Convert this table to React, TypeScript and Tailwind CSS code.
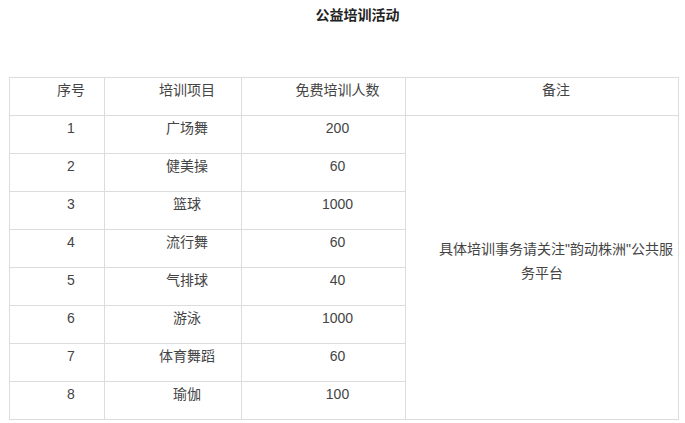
import React from 'react'

const rows = [
  { no: '1', item: '广场舞', count: '200' },
  { no: '2', item: '健美操', count: '60' },
  { no: '3', item: '篮球', count: '1000' },
  { no: '4', item: '流行舞', count: '60' },
  { no: '5', item: '气排球', count: '40' },
  { no: '6', item: '游泳', count: '1000' },
  { no: '7', item: '体育舞蹈', count: '60' },
  { no: '8', item: '瑜伽', count: '100' },
]

const cell = 'border border-[#dcdcdc] align-top text-center pl-[29px] pr-[1px] pt-0 pb-0 leading-[24px] font-normal'

export default function App() {
  return (
    <div
      className="w-[685px] h-[423px] bg-white text-[#444] text-[14px] overflow-hidden"
      style={{ fontFamily: '"Liberation Sans", Arial, "Noto Sans CJK SC", sans-serif' }}
    >
      <h1 className="pt-[5px] pl-[30px] h-[77px] text-center text-[14px] leading-[20px] font-bold text-[#222]">
        公益培训活动
      </h1>

      <table className="ml-[9px] w-[670px] border-collapse table-fixed">
        <colgroup>
          <col className="w-[95px]" />
          <col className="w-[137px]" />
          <col className="w-[164px]" />
          <col />
        </colgroup>
        <thead>
          <tr className="h-[38px]">
            <th className={cell}>序号</th>
            <th className={cell}>培训项目</th>
            <th className={cell}>免费培训人数</th>
            <th className={cell}>备注</th>
          </tr>
        </thead>
        <tbody>
          {rows.map((r, i) => (
            <tr key={r.no} className="h-[38px]">
              <td className={cell}>{r.no}</td>
              <td className={cell}>{r.item}</td>
              <td className={cell}>{r.count}</td>
              {i === 0 && (
                <td
                  rowSpan={rows.length}
                  className="border border-[#dcdcdc] align-middle text-center px-[33px] pb-[14px] leading-[24px]"
                >
                  <span className="whitespace-nowrap">具体培训事务请关注"韵动株洲"公共服</span>务平台
                </td>
              )}
            </tr>
          ))}
        </tbody>
      </table>
    </div>
  )
}
